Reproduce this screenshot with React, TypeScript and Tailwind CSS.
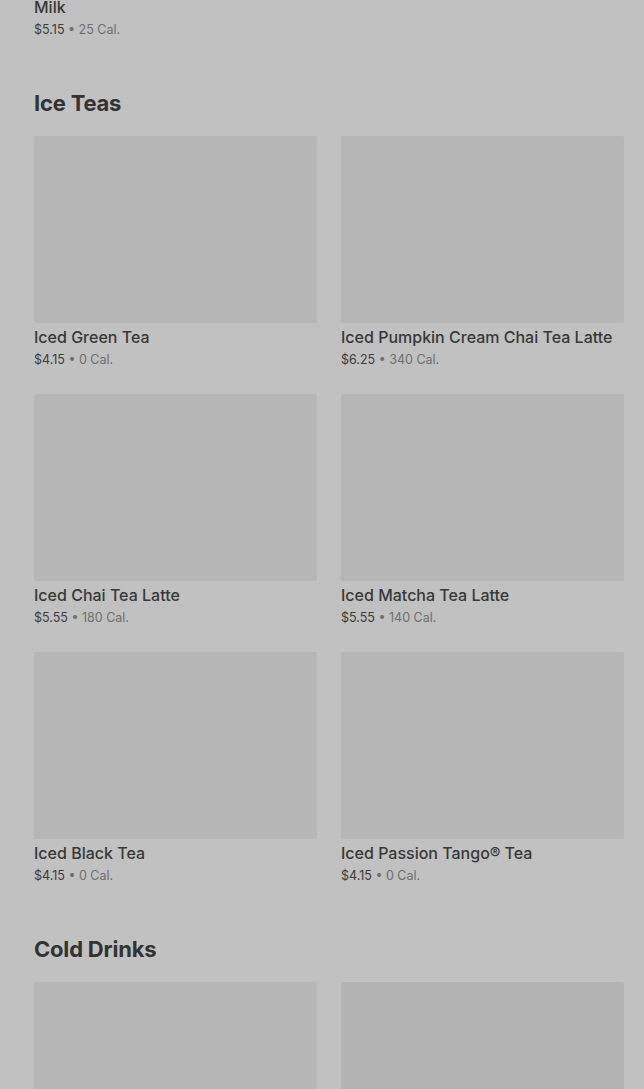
const iceTeas = [
  { name: "Iced Green Tea", price: "$4.15", cal: "0 Cal." },
  { name: "Iced Pumpkin Cream Chai Tea Latte", price: "$6.25", cal: "340 Cal." },
  { name: "Iced Chai Tea Latte", price: "$5.55", cal: "180 Cal." },
  { name: "Iced Matcha Tea Latte", price: "$5.55", cal: "140 Cal." },
  { name: "Iced Black Tea", price: "$4.15", cal: "0 Cal." },
  { name: "Iced Passion Tango® Tea", price: "$4.15", cal: "0 Cal." },
];

type Item = { name: string; price: string; cal: string };

function Meta({ price, cal }: { price: string; cal: string }) {
  return (
    <p className="mt-[3px] text-[12.5px] leading-[18px] text-[#3c3c3c]">
      {price}
      <span className="text-[#6e6e6e]"> • {cal}</span>
    </p>
  );
}

function Card({ item }: { item: Item }) {
  return (
    <div className="flex flex-col">
      <div className="h-[187px] rounded-[2px] bg-[#b6b6b6]" />
      <h3 className="mt-[3px] text-[16px] leading-[22px] font-medium text-[#383838]">
        {item.name}
      </h3>
      <Meta price={item.price} cal={item.cal} />
    </div>
  );
}

export default function App() {
  return (
    <div
      className="min-h-[1089px] w-full overflow-hidden bg-[#c1c1c1] pl-[34px] pr-[20px]"
      style={{ fontFamily: "Inter, 'Open Sans', sans-serif" }}
    >
      {/* tail of the previous section */}
      <div className="-mt-[4px]">
        <h3 className="text-[16px] leading-[22px] font-medium text-[#383838]">Milk</h3>
        <Meta price="$5.15" cal="25 Cal." />
      </div>

      <section className="mt-[50px]">
        <h2 className="text-[22px] leading-[28px] font-bold tracking-[-0.2px] text-[#333333]">
          Ice Teas
        </h2>
        <div className="mt-[19px] grid grid-cols-2 gap-x-[24px] gap-y-[25px]">
          {iceTeas.map((t) => (
            <Card key={t.name} item={t} />
          ))}
        </div>
      </section>

      <section className="mt-[50px]">
        <h2 className="text-[22px] leading-[28px] font-bold tracking-[-0.2px] text-[#333333]">
          Cold Drinks
        </h2>
        <div className="mt-[19px] grid grid-cols-2 gap-x-[24px]">
          <div className="h-[187px] rounded-[2px] bg-[#b6b6b6]" />
          <div className="h-[187px] rounded-[2px] bg-[#b3b3b3]" />
        </div>
      </section>
    </div>
  );
}
